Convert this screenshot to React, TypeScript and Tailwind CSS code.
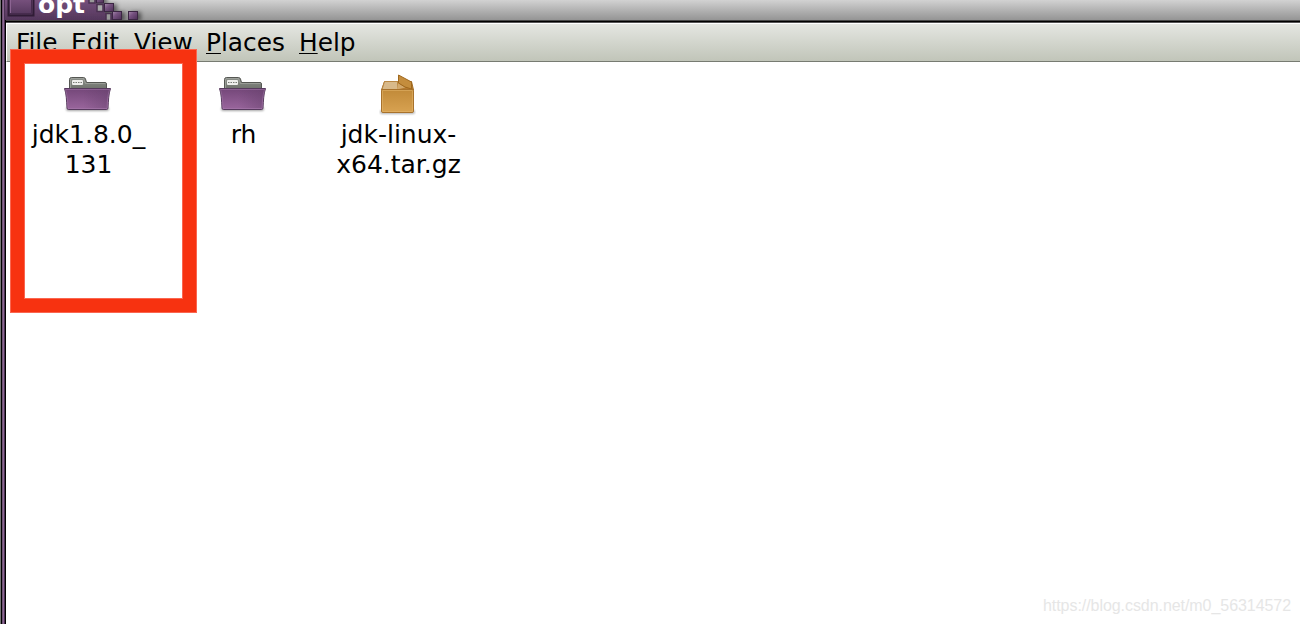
import type { ReactNode } from "react";

interface MenuItem {
  label: string;
  className: string;
}

interface FileItem {
  lines: string[];
  icon: ReactNode;
}

const menuItems: MenuItem[] = [
  { label: "File", className: "w-[55px]" },
  { label: "Edit", className: "w-[63px]" },
  { label: "View", className: "w-[72px]" },
  { label: "Places", className: "w-[93px]" },
  { label: "Help", className: "w-[60px]" },
];

function FolderIcon() {
  return (
    <svg width="49" height="39" viewBox="0 0 49 39">
      <defs>
        <linearGradient id="folderFront" x1="0" y1="0" x2="0" y2="1">
          <stop offset="0" stopColor="#744779" />
          <stop offset="1" stopColor="#9a669d" />
        </linearGradient>
        <linearGradient id="folderSide" x1="0" y1="0" x2="1" y2="0">
          <stop offset="0.4" stopColor="#64406b" stopOpacity="0" />
          <stop offset="1" stopColor="#64406b" stopOpacity="0.5" />
        </linearGradient>
        <linearGradient id="folderBack" x1="0" y1="0" x2="0" y2="1">
          <stop offset="0" stopColor="#8d918b" />
          <stop offset="0.5" stopColor="#686b65" />
        </linearGradient>
        <filter id="folderShadow" x="-10%" y="-100%" width="120%" height="300%">
          <feGaussianBlur stdDeviation="1" />
        </filter>
      </defs>
      <rect x="3" y="33" width="43" height="4" rx="2" fill="#000" opacity="0.35" filter="url(#folderShadow)" />
      <path
        d="M6.500 32V5.500Q6.500 3.500 8.500 3.500H20.500Q22 3.500 22.500 5L23.500 8.500H42Q43.500 8.500 43.500 10V32Z"
        fill="url(#folderBack)"
        stroke="#555753"
      />
      <path d="M7.500 14V5.500Q7.500 4.500 9 4.500H20.500L22.500 9.500H42.500" fill="none" stroke="#a5a8a2" strokeOpacity="0.7" />
      <rect x="9" y="6" width="11" height="5" rx="1" fill="#eeeeec" />
      <path d="M10 8.500H19" stroke="#777a75" strokeDasharray="1.500 1" />
      <path
        d="M1.500 14.500H47.500C45.500 20 45.500 27 45 34Q44.900 35.500 43.500 35.500H5.500Q4.100 35.500 4 34C3.500 27 3.500 20 1.500 14.500Z"
        fill="url(#folderFront)"
        stroke="#573a5e"
      />
      <path
        d="M2.500 15.500H46.500C44.500 22 44.500 27 44 34.500H5C4.500 27 4.500 22 2.500 15.500Z"
        fill="url(#folderSide)"
        stroke="#b084b4"
        strokeOpacity="0.4"
      />
    </svg>
  );
}

function PackageIcon() {
  return (
    <svg width="37" height="42" viewBox="0 0 37 42">
      <defs>
        <linearGradient id="boxFront" x1="0" y1="0" x2="0" y2="1">
          <stop offset="0" stopColor="#c18a39" />
          <stop offset="1" stopColor="#d8a251" />
        </linearGradient>
        <filter id="boxShadow" x="-10%" y="-100%" width="120%" height="300%">
          <feGaussianBlur stdDeviation="1" />
        </filter>
      </defs>
      <rect x="1" y="36" width="35" height="4" rx="2" fill="#000" opacity="0.3" filter="url(#boxShadow)" />
      <path d="M5.500 7.500H32.500L34.500 16H2.500Z" fill="#b57b30" stroke="#a46d24" />
      <path d="M5.500 7.500H18.500V15.500H3Z" fill="#d8b98a" stroke="#b98743" />
      <path d="M19 9L26.500 13.500L18 15.500Z" fill="#d2a86b" />
      <rect x="2.500" y="15.500" width="32" height="23" rx="1.500" fill="url(#boxFront)" stroke="#a8722c" />
      <path d="M3.500 37.500V16.500H33.500V37.500Z" fill="none" stroke="#e6b96f" strokeOpacity="0.5" />
      <path d="M19.500 1L32.500 8V15L26 13L19.500 9Z" fill="#c48d3d" stroke="#a0681d" />
    </svg>
  );
}

const files: FileItem[] = [
  { lines: ["jdk1.8.0_", "131"], icon: <FolderIcon /> },
  { lines: ["rh"], icon: <FolderIcon /> },
  { lines: ["jdk-linux-", "x64.tar.gz"], icon: <PackageIcon /> },
];

function TitleBar() {
  return (
    <header className="h-[23px] shrink-0 overflow-hidden bg-linear-to-b from-[#d2d2d2] to-[#969696] to-85%">
      <svg width="1300" height="23" viewBox="0 0 1300 23">
        <defs>
          <linearGradient id="titlePurple" x1="0" y1="0" x2="0" y2="1">
            <stop offset="0" stopColor="#76507c" />
            <stop offset="1" stopColor="#53365b" />
          </linearGradient>
          <linearGradient id="tile" x1="0" y1="0" x2="1" y2="1">
            <stop offset="0" stopColor="#a88aac" />
            <stop offset="0.4" stopColor="#765280" />
            <stop offset="1" stopColor="#4c2e55" />
          </linearGradient>
          <filter id="tileShadow" x="-30%" y="-30%" width="180%" height="180%">
            <feDropShadow dx="3" dy="1" stdDeviation="2" floodOpacity="0.5" />
          </filter>
        </defs>
        <g filter="url(#tileShadow)">
          <path d="M5 0H96V4H105V13H113V20H5Z" fill="url(#titlePurple)" />
          <rect x="96.500" y="-5" width="7" height="8" fill="url(#tile)" stroke="#3b2742" />
          <rect x="104.500" y="3.500" width="9" height="8" fill="url(#tile)" stroke="#3b2742" />
          <rect x="112.500" y="11.500" width="9" height="8" fill="url(#tile)" stroke="#3b2742" />
          <rect x="128.500" y="11.500" width="9" height="8" fill="url(#tile)" stroke="#3b2742" />
        </g>
        <rect x="89" y="-4" width="6" height="7" fill="#999" stroke="#4a3150" strokeWidth="1.500" />
        <rect x="97" y="4.500" width="6" height="7" fill="#aaa" stroke="#4a3150" strokeWidth="1.500" />
        <rect x="106" y="13.500" width="5" height="7" fill="#999" stroke="#4a3150" strokeWidth="1.500" />
        <path d="M8.500 0V15.500H33.500V0" fill="url(#titlePurple)" stroke="#301c36" strokeWidth="2" />
        <path d="M10.500 0V14" fill="none" stroke="#8c6492" />
        <path d="M10 13.500H31.500V0" fill="none" stroke="#472c4e" />
        <text
          x="38"
          y="13"
          fill="#fff"
          fontFamily="DejaVu Sans, sans-serif"
          fontSize="25"
          fontWeight="700"
        >
          opt
        </text>
        <rect x="5" y="20" width="1295" height="1" fill="#484848" />
        <rect x="5" y="21" width="1295" height="1" fill="#000" />
        <rect x="6" y="22" width="1294" height="1" fill="#555" />
      </svg>
    </header>
  );
}

function MenuBar() {
  return (
    <nav className="flex h-[39px] shrink-0 border-t border-b border-l border-t-white border-b-[#777b72] border-l-white bg-linear-to-b from-[#e4e6e1] to-[#c1c5b9] pl-[9px] text-[24.8px]">
      {menuItems.map((item) => (
        <span
          key={item.label}
          className={`shrink-0 pt-[4px] leading-[30px] whitespace-nowrap ${item.className}`}
        >
          <span className="underline decoration-1 underline-offset-[2px]">
            {item.label[0]}
          </span>
          {item.label.slice(1)}
        </span>
      ))}
    </nav>
  );
}

function App() {
  return (
    <div className="relative h-[624px] w-[1300px] overflow-hidden bg-white font-['DejaVu_Sans',sans-serif] text-[25px] text-black">
      <div className="flex h-full flex-col">
        <TitleBar />
        <div className="flex grow flex-col pl-[6px]">
          <MenuBar />
          <main className="flex pl-[4px]">
            {files.map((file) => (
              <div
                key={file.lines[0]}
                className="flex w-[155px] shrink-0 flex-col items-center pt-[12px]"
              >
                <div className="flex h-[46px] items-start">{file.icon}</div>
                {file.lines.map((line) => (
                  <p key={line} className="pl-[2px] leading-[30px] whitespace-nowrap">
                    {line}
                  </p>
                ))}
              </div>
            ))}
          </main>
        </div>
      </div>

      {/* Window frame */}
      <div className="absolute top-0 left-0 flex h-full">
        <div className="w-px bg-[#777777]" />
        <div className="w-px bg-black" />
        <div className="w-px bg-[#6f5276]" />
        <div className="w-px bg-[#8c6892]" />
        <div className="w-px bg-[#4b3053]" />
        <div className="mt-[20px] w-px bg-black" />
      </div>

      {/* Highlight around the extracted directory */}
      <div className="absolute top-[49px] left-[10px] h-[264px] w-[187px] border border-[#fa6650]">
        <div className="h-full border-[13px] border-[#f73210]">
          <div className="h-full border border-[#fa6650]" />
        </div>
      </div>

      <p className="absolute right-[9px] bottom-[8px] font-['Liberation_Sans',sans-serif] text-[16px] leading-[20px] tracking-[-0.06px] text-[#e6e6e6]">
        https://blog.csdn.net/m0_56314572
      </p>
    </div>
  );
}

export default App;
